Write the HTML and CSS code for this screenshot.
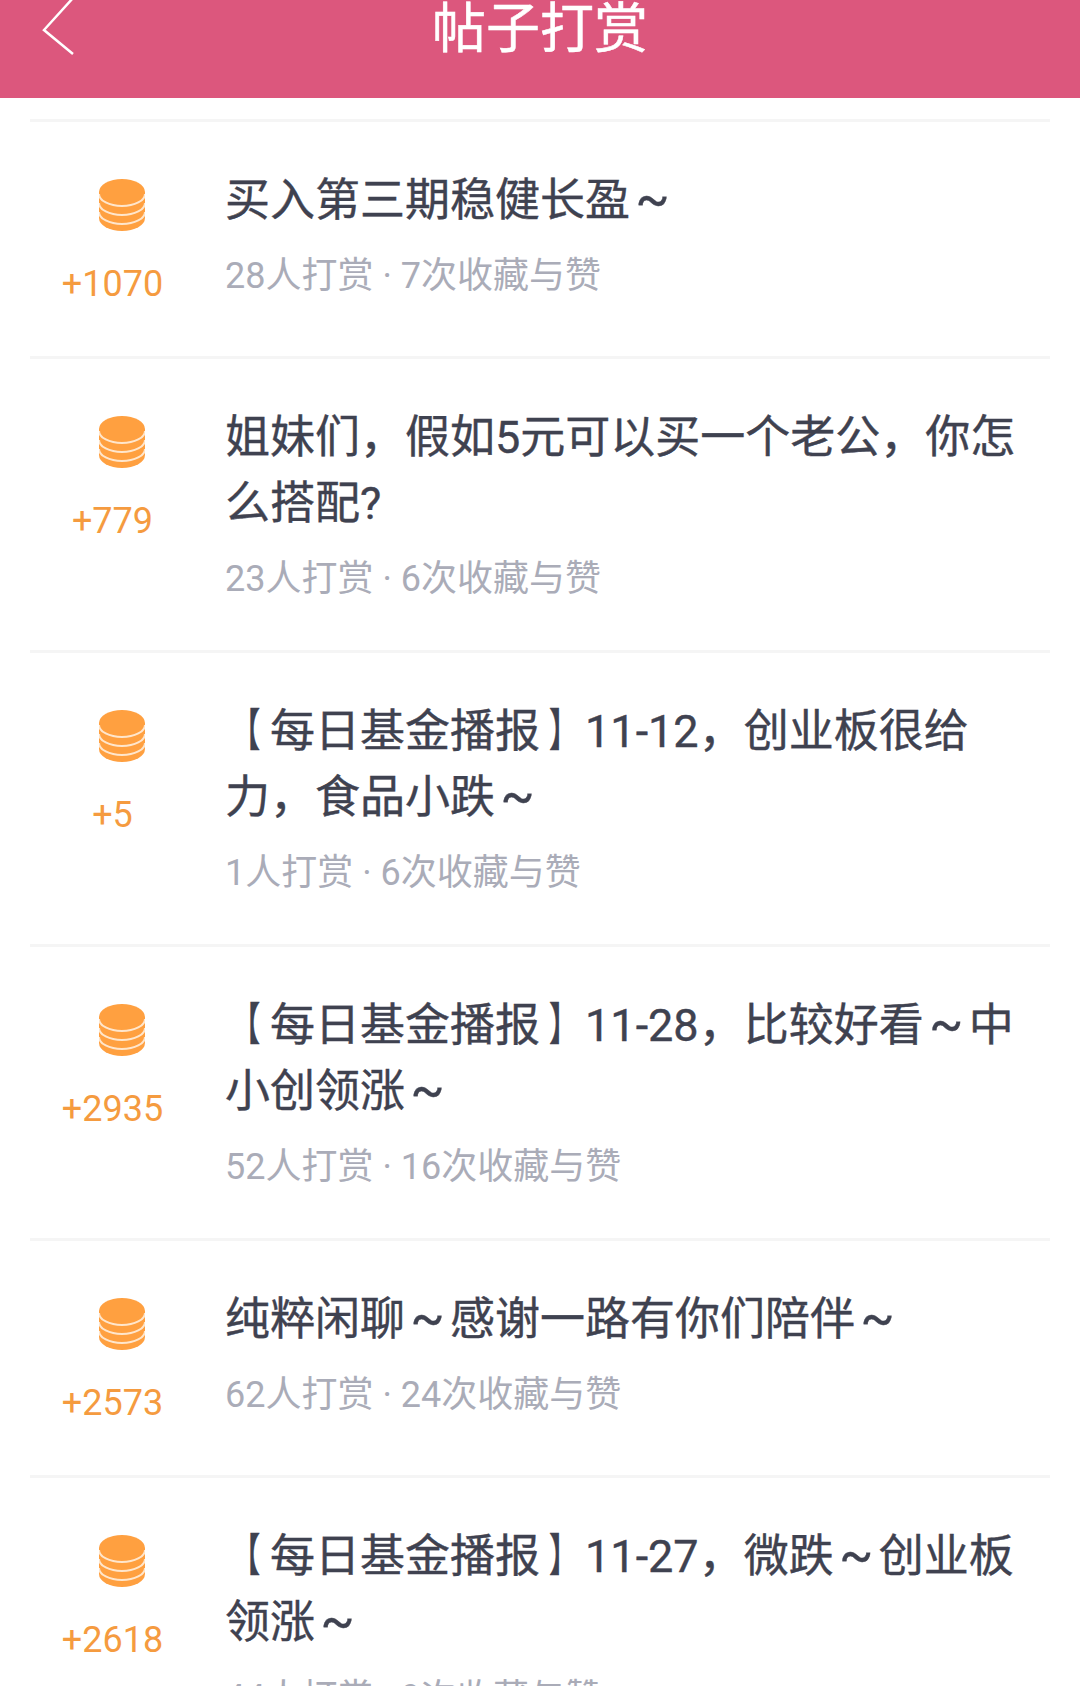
FILE: index.html
```html
<!DOCTYPE html>
<html>
<head>
  <title>帖子打赏</title>
  <link rel="stylesheet" href="styles.css">
</head>
<body>
  <div class="header">
    <svg class="back" width="34" height="60" viewBox="0 0 34 60"><path d="M31 1 L2 33 L31 57" /></svg>
    <div class="title">帖子打赏</div>
  </div>
  <div class="list">
    <div class="item">
      <div class="reward">
        <svg class="coins" width="46" height="52" viewBox="0 0 46 52"><use href="#coin-stack"/></svg>
        <div class="amount">+1070</div>
      </div>
      <div class="info">
        <div class="name">买入第三期稳健长盈<span class="tilde">~</span></div>
        <div class="meta">28人打赏 · 7次收藏与赞</div>
      </div>
    </div>
    <div class="item">
      <div class="reward">
        <svg class="coins" width="46" height="52" viewBox="0 0 46 52"><use href="#coin-stack"/></svg>
        <div class="amount">+779</div>
      </div>
      <div class="info">
        <div class="name">姐妹们，假如5元可以买一个老公，你怎么搭配?</div>
        <div class="meta">23人打赏 · 6次收藏与赞</div>
      </div>
    </div>
    <div class="item">
      <div class="reward">
        <svg class="coins" width="46" height="52" viewBox="0 0 46 52"><use href="#coin-stack"/></svg>
        <div class="amount">+5</div>
      </div>
      <div class="info">
        <div class="name"><span class="br-l">【</span>每日基金播报<span class="br-r">】</span>11-12，创业板很给力，食品小跌<span class="tilde">~</span></div>
        <div class="meta">1人打赏 · 6次收藏与赞</div>
      </div>
    </div>
    <div class="item">
      <div class="reward">
        <svg class="coins" width="46" height="52" viewBox="0 0 46 52"><use href="#coin-stack"/></svg>
        <div class="amount">+2935</div>
      </div>
      <div class="info">
        <div class="name"><span class="br-l">【</span>每日基金播报<span class="br-r">】</span>11-28，比较好看<span class="tilde">~</span>中小创领涨<span class="tilde">~</span></div>
        <div class="meta">52人打赏 · 16次收藏与赞</div>
      </div>
    </div>
    <div class="item">
      <div class="reward">
        <svg class="coins" width="46" height="52" viewBox="0 0 46 52"><use href="#coin-stack"/></svg>
        <div class="amount">+2573</div>
      </div>
      <div class="info">
        <div class="name">纯粹闲聊<span class="tilde">~</span>感谢一路有你们陪伴<span class="tilde">~</span></div>
        <div class="meta">62人打赏 · 24次收藏与赞</div>
      </div>
    </div>
    <div class="item">
      <div class="reward">
        <svg class="coins" width="46" height="52" viewBox="0 0 46 52"><use href="#coin-stack"/></svg>
        <div class="amount">+2618</div>
      </div>
      <div class="info">
        <div class="name"><span class="br-l">【</span>每日基金播报<span class="br-r">】</span>11-27，微跌<span class="tilde">~</span>创业板领涨<span class="tilde">~</span></div>
        <div class="meta">44人打赏 · 9次收藏与赞</div>
      </div>
    </div>
  </div>
  <svg class="defs" width="0" height="0">
    <symbol id="coin-stack" viewBox="0 0 46 52">
      <path fill="#ffa040" d="M0 13 A23 13 0 0 1 46 13 L46 39 A23 13 0 0 1 0 39 Z"/>
      <path fill="none" stroke="#ffe6cc" stroke-width="2" d="M0 15 A23 12 0 0 0 46 15 M0 24 A23 12 0 0 0 46 24 M0 33 A23 12 0 0 0 46 33"/>
    </symbol>
  </svg>
</body>
</html>
```
FILE: styles.css
```css
html, body {
  height: 1686px;
  overflow: hidden;
}

body {
  margin: 0;
  background-color: #fff;
  font-family: Roboto, "Noto Sans CJK SC", sans-serif;
}

.header {
  height: 98px;
  background-color: #dc577d;
  position: relative;
  text-align: center;
}

.back {
  position: absolute;
  left: 42px;
  top: -3px;
  fill: none;
  stroke: #fff;
  stroke-width: 2.5;
}

.title {
  color: #fff;
  font-size: 54px;
  line-height: 60px;
  -webkit-text-stroke: 0.5px;
}

.list {
  margin: 21px 30px 0;
}

.item {
  display: flex;
  border-top: 3px solid #f5f5f5;
  min-height: 237px;
  box-sizing: border-box;
  padding-top: 46px;
}

.reward {
  width: 165px;
  flex-shrink: 0;
  text-align: center;
}

.coins {
  display: block;
  margin: 11px 0 0 68.5px;
}

.amount {
  color: #f59b3f;
  font-size: 36px;
  line-height: 42px;
  margin-top: 32px;
}

.info {
  flex: 1;
  padding-left: 30px;
  padding-right: 11px;
}

.name {
  color: #3f4250;
  font-size: 45px;
  line-height: 66px;
  -webkit-text-stroke: 0.4px;
}

.tilde {
  display: inline-block;
  width: 45px;
  font-size: 50px;
  line-height: 40px;
  text-align: center;
}

/* narrower brackets than the font draws */
.br-l, .br-r {
  display: inline-block;
  line-height: 40px;
}

.br-l {
  transform: translateX(-2px) scaleX(0.65);
}

.br-r {
  transform: translateX(1px) scaleX(0.65);
}

.meta {
  color: #aaacb8;
  font-size: 36px;
  line-height: 44px;
  margin-top: 20px;
  padding-bottom: 49px;
}

.defs {
  position: absolute;
}
```
